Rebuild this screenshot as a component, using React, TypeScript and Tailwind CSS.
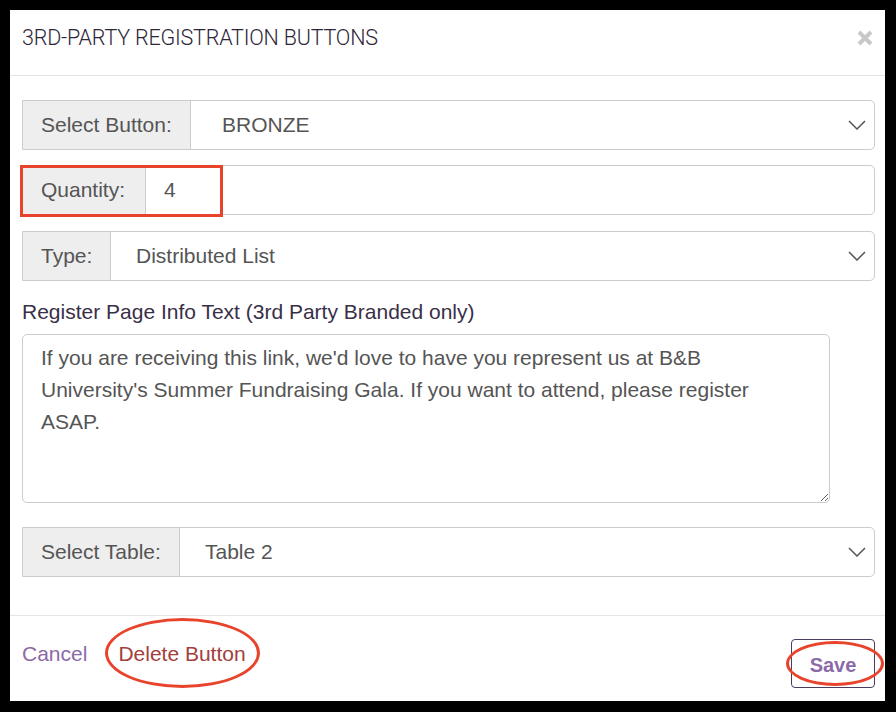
import React from 'react';

const Chevron = () => (
  <svg width="18" height="10" viewBox="0 0 18 10" className="shrink-0">
    <polyline points="1,1 9,9 17,1" fill="none" stroke="#555" strokeWidth="1.5" />
  </svg>
);

const SelectRow = ({ label, value, labelW, valuePad }: { label: string; value: string; labelW: string; valuePad: string }) => (
  <div className="flex h-[50px] border border-[#ccc] rounded-r-[5px] text-[21px] text-[#555]">
    <div className={`${labelW} shrink-0 bg-[#eee] border-r border-[#ccc] flex items-center pl-[18px]`}>{label}</div>
    <div className={`flex-1 flex items-center justify-between ${valuePad} pr-[8px]`}>
      <span>{value}</span>
      <Chevron />
    </div>
  </div>
);

const App = () => {
  return (
    <div className="min-h-[712px] bg-black pt-[10px] pl-[10px] pr-[11px] pb-[11px] font-['Liberation_Sans',Arial,sans-serif]">
      <div className="bg-white h-[691px] flex flex-col">
        {/* Header */}
        <div className="h-[66px] border-b border-[#e5e5e5] flex items-start justify-between pl-[12px] pr-[12px] pt-[16px]">
          <h2 className="font-['Roboto',sans-serif] font-light text-[21.5px] leading-[24px] text-[#2e2638] tracking-[-0.2px]">3RD-PARTY REGISTRATION BUTTONS</h2>
          <svg width="16" height="16" viewBox="0 0 16 16" className="mt-[4px]">
            <path d="M2 2 L14 14 M14 2 L2 14" stroke="#c8c8c8" strokeWidth="4" strokeLinecap="butt" />
          </svg>
        </div>

        {/* Body */}
        <div className="flex-1 pl-[12px] pr-[10px] pt-[24px] flex flex-col">
          <SelectRow label="Select Button:" value="BRONZE" labelW="w-[168px]" valuePad="pl-[31px]" />

          <div className="relative mt-[15px] flex h-[50px] border border-[#ccc] rounded-r-[5px] text-[21px] text-[#555]">
            <div className="w-[123px] shrink-0 bg-[#eee] border-r border-[#ccc] flex items-center pl-[18px]">Quantity:</div>
            <div className="flex-1 flex items-center pl-[18px]">4</div>
            <div className="absolute left-[-3px] top-[-1px] w-[203px] h-[52px] border-[3px] border-[#e8432b]" />
          </div>

          <div className="mt-[16px]">
            <SelectRow label="Type:" value="Distributed List" labelW="w-[88px]" valuePad="pl-[25px]" />
          </div>

          <label className="mt-[19px] text-[21px] leading-[24px] text-[#3a2f48]">Register Page Info Text (3rd Party Branded only)</label>

          <textarea
            className="mt-[10px] w-[808px] h-[169px] border border-[#ccc] rounded-[5px] pt-[7px] px-[18px] text-[21px] leading-[32px] text-[#555] resize-y outline-none"
            defaultValue="If you are receiving this link, we'd love to have you represent us at B&B University's Summer Fundraising Gala. If you want to attend, please register ASAP."
          />

          <div className="mt-[24px]">
            <SelectRow label="Select Table:" value="Table 2" labelW="w-[157px]" valuePad="pl-[25px]" />
          </div>
        </div>

        {/* Footer */}
        <div className="h-[86px] border-t border-[#e5e5e5] flex items-start justify-between pl-[12px] pr-[10px]">
          <div className="flex items-center gap-[31px] pt-[22px] text-[21px] leading-[32px]">
            <button className="text-[#8b6aa7]">Cancel</button>
            <div className="relative">
              <button className="text-[#a3403b]">Delete Button</button>
              <div className="absolute left-[-13px] top-[-20px] w-[155px] h-[70px] rounded-[50%] border-[3.5px] border-[#e8432b]" />
            </div>
          </div>
          <div className="relative mt-[23px]">
            <button className="w-[84px] h-[49px] border border-[#4a3d5e] rounded-[4px] text-[20px] font-bold text-[#8b6aa7] pt-[3px]">Save</button>
            <div className="absolute left-[-5px] top-[2px] w-[98px] h-[45px] rounded-[50%] border-[3.5px] border-[#e8432b]" />
          </div>
        </div>
      </div>
    </div>
  );
};

export default App;
